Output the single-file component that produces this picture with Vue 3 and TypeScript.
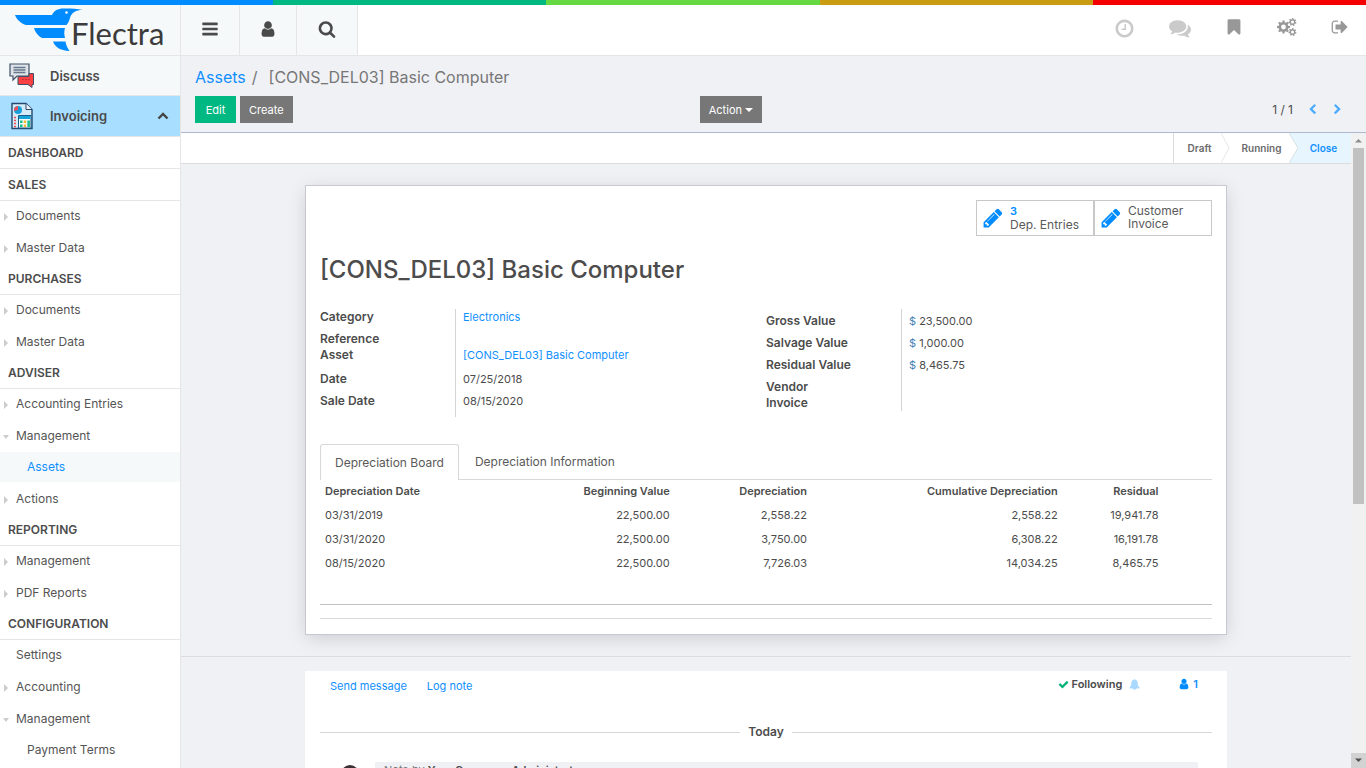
<script setup lang="ts">
interface MenuItem { label: string; kind: 'closed' | 'open' | 'leaf'; children?: { label: string; active?: boolean }[] }
interface MenuSection { title: string; items: MenuItem[] }
interface BoardRow { date: string; begin: string; amount: string; cumulative: string; residual: string }

const stripes = ['#008cff', '#00b881', '#66d942', '#c99c12', '#f40000']

const sections: MenuSection[] = [
  { title: 'DASHBOARD', items: [] },
  { title: 'SALES', items: [{ label: 'Documents', kind: 'closed' }, { label: 'Master Data', kind: 'closed' }] },
  { title: 'PURCHASES', items: [{ label: 'Documents', kind: 'closed' }, { label: 'Master Data', kind: 'closed' }] },
  {
    title: 'ADVISER',
    items: [
      { label: 'Accounting Entries', kind: 'closed' },
      { label: 'Management', kind: 'open', children: [{ label: 'Assets', active: true }] },
      { label: 'Actions', kind: 'closed' },
    ],
  },
  { title: 'REPORTING', items: [{ label: 'Management', kind: 'closed' }, { label: 'PDF Reports', kind: 'closed' }] },
  {
    title: 'CONFIGURATION',
    items: [
      { label: 'Settings', kind: 'leaf' },
      { label: 'Accounting', kind: 'closed' },
      { label: 'Management', kind: 'open', children: [{ label: 'Payment Terms' }] },
    ],
  },
]

const rows: BoardRow[] = [
  { date: '03/31/2019', begin: '22,500.00', amount: '2,558.22', cumulative: '2,558.22', residual: '19,941.78' },
  { date: '03/31/2020', begin: '22,500.00', amount: '3,750.00', cumulative: '6,308.22', residual: '16,191.78' },
  { date: '08/15/2020', begin: '22,500.00', amount: '7,726.03', cumulative: '14,034.25', residual: '8,465.75' },
]

const icons = {
  bars: 'M1664 1344v128q0 26-19 45t-45 19h-1408q-26 0-45-19t-19-45v-128q0-26 19-45t45-19h1408q26 0 45 19t19 45zm0-512v128q0 26-19 45t-45 19h-1408q-26 0-45-19t-19-45v-128q0-26 19-45t45-19h1408q26 0 45 19t19 45zm0-512v128q0 26-19 45t-45 19h-1408q-26 0-45-19t-19-45v-128q0-26 19-45t45-19h1408q26 0 45 19t19 45z',
  user: 'M1536 1399q0 109-62.5 187t-150.5 78h-854q-88 0-150.5-78t-62.5-187q0-85 8.5-160.5t31.5-152 58.5-131 94-89 134.5-34.5q131 128 313 128t313-128q76 0 134.5 34.5t94 89 58.5 131 31.5 152 8.5 160.5zm-256-887q0 159-112.5 271.5t-271.5 112.5-271.5-112.5-112.5-271.5 112.5-271.5 271.5-112.5 271.5 112.5 112.5 271.5z',
  search: 'M1216 832q0-185-131.5-316.5t-316.5-131.5-316.5 131.5-131.5 316.5 131.5 316.5 316.5 131.5 316.5-131.5 131.5-316.5zm512 832q0 52-38 90t-90 38q-54 0-90-38l-343-342q-179 124-399 124-143 0-273.5-55.5t-225-150-150-225-55.5-273.5 55.5-273.5 150-225 225-150 273.5-55.5 273.5 55.5 225 150 150 225 55.5 273.5q0 220-124 399l343 343q37 37 37 90z',
  clock: 'M1024 544v448q0 14-9 23t-23 9h-320q-14 0-23-9t-9-23v-64q0-14 9-23t23-9h224v-352q0-14 9-23t23-9h64q14 0 23 9t9 23zm416 352q0-148-73-273t-198-198-273-73-273 73-198 198-73 273 73 273 198 198 273 73 273-73 198-198 73-273zm224 0q0 209-103 385.5t-279.5 279.5-385.5 103-385.5-103-279.5-279.5-103-385.5 103-385.5 279.5-279.5 385.5-103 385.5 103 279.5 279.5 103 385.5z',
  comments: 'M1408 768q0 139-94 257t-256.5 186.5-353.5 68.5q-86 0-176-16-124 88-278 128-36 9-86 16h-3q-11 0-20.5-8t-11.5-21q-1-3-1-6.5t.5-6.5 2-6l2.5-5 3.5-5.5 4-5 4.5-5 4-4.5q5-6 23-25t26-29.5 22.5-29 25-38.5 20.5-44q-124-72-195-177t-71-224q0-139 94-257t256.5-186.5 353.5-68.5 353.5 68.5 256.5 186.5 94 257zm384 256q0 120-71 224.5t-195 176.5q10 24 20.5 44t25 38.5 22.5 29 26 29.5 23 25q1 1 4 4.5t4.5 5 4 5 3.5 5.5l2.5 5 2 6 .5 6.5-1 6.5q-3 14-13 22t-22 7q-50-7-86-16-154-40-278-128-90 16-176 16-271 0-472-132 58 4 88 4 161 0 309-45t264-129q125-92 192-212t67-254q0-77-23-152 129 71 204 178t75 230z',
  bookmark: 'M1420 128q23 0 44 9 33 13 52.5 41t19.5 62v1289q0 34-19.5 62t-52.5 41q-19 8-44 8-48 0-83-32l-441-424-441 424q-36 33-83 33-23 0-44-9-33-13-52.5-41t-19.5-62v-1289q0-34 19.5-62t52.5-41q21-9 44-9h1048z',
  signOut: 'M704 1440q0 4 1 20t.5 26.5-3 23.5-10 19.5-20.5 6.5h-320q-119 0-203.5-84.5t-84.5-203.5v-704q0-119 84.5-203.5t203.5-84.5h320q13 0 22.5 9.5t9.5 22.5q0 4 1 20t.5 26.5-3 23.5-10 19.5-20.5 6.5h-320q-66 0-113 47t-47 113v704q0 66 47 113t113 47h312l11.5 1 11.5 3 8 5.5 7 9 2 13.5zm928-544q0 26-19 45l-544 544q-19 19-45 19t-45-19-19-45v-288h-448q-26 0-45-19t-19-45v-384q0-26 19-45t45-19h448v-288q0-26 19-45t45-19 45 19l544 544q19 19 19 45z',
  pencil: 'M491 1536l91-91-235-235-91 91v107h128v128h107zm523-928q0-22-22-22-10 0-17 7l-542 542q-7 7-7 17 0 22 22 22 10 0 17-7l542-542q7-7 7-17zm-54-192l416 416-832 832h-416v-416zm683 96q0 53-37 90l-166 166-416-416 166-165q36-38 90-38 53 0 91 38l235 234q37 39 37 91z',
  check: 'M1671 566q0 40-28 68l-724 724-136 136q-28 28-68 28t-68-28l-136-136-362-362q-28-28-28-68t28-68l136-136q28-28 68-28t68 28l294 295 656-657q28-28 68-28t68 28l136 136q28 28 28 68z',
  bell: 'M912 1696q0-16-16-16-59 0-101.5-42.5t-42.5-101.5q0-16-16-16t-16 16q0 73 51.5 124.5t124.5 51.5q16 0 16-16zm816-288q0 52-38 90t-90 38h-448q0 106-75 181t-181 75-181-75-75-181h-448q-52 0-90-38t-38-90q50-42 91-88t85-119.5 74.5-158.5 50-206 19.5-260q0-152 117-282.5t307-158.5q-8-19-8-39 0-40 28-68t68-28 68 28 28 68q0 20-8 39 190 28 307 158.5t117 282.5q0 139 19.5 260t50 206 74.5 158.5 85 119.5 91 88z',
  left: 'M1427 301l-531 531 531 531q19 19 19 45t-19 45l-166 166q-19 19-45 19t-45-19l-742-742q-19-19-19-45t19-45l742-742q19-19 45-19t45 19l166 166q19 19 19 45t-19 45z',
  right: 'M1363 877l-742 742q-19 19-45 19t-45-19l-166-166q-19-19-19-45t19-45l531-531-531-531q-19-19-19-45t19-45l166-166q19-19 45-19t45 19l742 742q19 19 19 45t-19 45z',
}

// Outline of a toothed wheel with a round hole
function gear(cx: number, cy: number, outer: number, inner: number, hole: number, teeth: number, turn = 0): string {
  const points: string[] = []
  const step = (Math.PI * 2) / teeth
  for (let i = 0; i < teeth; i++) {
    const a = i * step + turn
    const corners: [number, number][] = [[-0.32, inner], [-0.2, outer], [0.2, outer], [0.32, inner]]
    for (const [offset, r] of corners) {
      points.push(`${(cx + r * Math.cos(a + offset * step)).toFixed(2)} ${(cy + r * Math.sin(a + offset * step)).toFixed(2)}`)
    }
  }
  return `M${points.join('L')}ZM${cx - hole} ${cy}a${hole} ${hole} 0 1 0 ${hole * 2} 0a${hole} ${hole} 0 1 0 ${-hole * 2} 0Z`
}
const cogs = gear(6.5, 9, 6.6, 4.9, 2.4, 8) + gear(15.5, 4, 4, 2.9, 1.5, 7, 0.3) + gear(15.5, 14, 4, 2.9, 1.5, 7, 0.3)
</script>

<template>
  <div class="app">
    <div class="stripes"><i v-for="c in stripes" :key="c" :style="{ background: c }"></i></div>

    <header class="top">
      <a class="logo" href="#" aria-label="Flectra">
        <svg width="70" height="46" viewBox="14 7 70 46" aria-hidden="true">
          <g fill="#008cff">
            <path d="M15 15H52C54 10 59 8 65 8.500C72 8.500 78 8.600 82.500 10C76 10 71.500 12.500 70 18C69 21.500 68 23.500 66.500 25H26C20 23 16.500 19 15 15Z" />
            <path d="M34 28H65C64 31 64 35 65 38H42C38 36 35 32 34 28Z" />
            <path d="M53 41.500H65.500C66 45 67.500 48 69.500 51C60 50.500 55 47 53 41.500Z" />
          </g>
          <circle cx="66.500" cy="12.500" r="1.300" fill="#fff" />
        </svg>
        <span class="wordmark">Flectra</span>
      </a>
      <nav class="tools">
        <button type="button" class="t1" aria-label="Toggle menu"><svg width="18" height="18" viewBox="0 0 1792 1792"><path :d="icons.bars" /></svg></button>
        <button type="button" class="t2" aria-label="User"><svg width="18" height="18" viewBox="0 0 1792 1792"><path :d="icons.user" /></svg></button>
        <button type="button" class="t3" aria-label="Search"><svg width="18" height="18" viewBox="0 0 1792 1792"><path :d="icons.search" /></svg></button>
      </nav>
      <nav class="systray">
        <button type="button" class="pale" aria-label="Activities"><svg width="21" height="21" viewBox="0 0 1792 1792"><path :d="icons.clock" /></svg></button>
        <button type="button" class="pale" aria-label="Conversations"><svg width="22" height="22" viewBox="0 0 1792 1792"><path :d="icons.comments" /></svg></button>
        <button type="button" aria-label="Bookmarks"><svg width="18" height="18" viewBox="0 0 1792 1792"><path :d="icons.bookmark" /></svg></button>
        <button type="button" aria-label="Settings"><svg width="20" height="18" viewBox="0 0 20 18"><path :d="cogs" fill-rule="evenodd" /></svg></button>
        <button type="button" aria-label="Log out"><svg width="18" height="18" viewBox="0 0 1792 1792"><path :d="icons.signOut" /></svg></button>
      </nav>
    </header>

    <div class="body">
      <aside class="side">
        <a class="app-link" href="#">
          <svg width="26" height="26" viewBox="0 0 26 26" aria-hidden="true">
            <path d="M1 1H20V13H8L4 17V13H1Z" fill="#dfe3e8" stroke="#3f5068" stroke-width="1.200" />
            <path d="M4.500 4.500H16.500M4.500 7H16.500M4.500 9.500H16.500" stroke="#66778e" stroke-width="1.300" />
            <path d="M9 13.500H20V10.500H24.500V21.500H23V24.500L19 21.500H9Z" fill="#fb4044" stroke="#3f5068" stroke-width="1" />
            <path d="M13.500 16.500h1m2 0h1m2 0h1" stroke="#8c1f2c" stroke-width="1.200" />
          </svg>
          <span>Discuss</span>
        </a>
        <a class="app-link current" href="#">
          <svg width="26" height="28" viewBox="0 0 26 28" aria-hidden="true">
            <path d="M3 1.500H17L23 7.500V26.500H3Z" fill="#d5ecf8" stroke="#26496d" stroke-width="1.400" />
            <path d="M17 1.500V7.500H23" fill="#f0f4f7" stroke="#26496d" stroke-width="1" />
            <circle cx="9" cy="8" r="4" fill="#159fdb" />
            <path d="M9 8V4A4 4 0 0 0 5.200 9Z" fill="#f14b57" />
            <path d="M5 15.500h2m-2 3h2m-2 3h2m-2 3h2" stroke="#ef4a58" stroke-width="1.500" />
            <path d="M9.500 13.500H22V26H9.500Z" fill="#f6fbfd" stroke="#1b5b86" stroke-width="1" />
            <path d="M10 14H21.500V17H10Z" fill="#13a4dc" />
            <path d="M11 18.500h2.500v2.500h-2.500zM11 22.500h2.500v2.500h-2.500z" fill="#18bd8b" />
            <path d="M14.700 18.500h2.500v2.500h-2.500zM14.700 22.500h2.500v2.500h-2.500z" fill="#f5b82e" />
            <path d="M18.400 18.500h2.500v6.500h-2.500z" fill="#18bd8b" />
          </svg>
          <span>Invoicing</span>
          <svg class="fold" width="12" height="8" viewBox="0 0 12 8" aria-hidden="true"><path d="M1.500 6.500L6 2L10.500 6.500" fill="none" stroke="#444" stroke-width="2.400" /></svg>
        </a>
        <section v-for="s in sections" :key="s.title">
          <h2>{{ s.title }}</h2>
          <ul v-if="s.items.length">
            <li v-for="m in s.items" :key="m.label">
              <a href="#" :class="['item', m.kind]">{{ m.label }}</a>
              <ul v-if="m.children" class="sub">
                <li v-for="c in m.children" :key="c.label"><a href="#" :class="['item', { active: c.active }]">{{ c.label }}</a></li>
              </ul>
            </li>
          </ul>
        </section>
      </aside>

      <main class="main">
        <div class="panel">
          <div class="crumbs"><a href="#">Assets</a><span class="slash">/</span><span>[CONS_DEL03] Basic Computer</span></div>
          <div class="actions">
            <div class="btns"><button type="button" class="btn green">Edit</button><button type="button" class="btn">Create</button></div>
            <div class="right">
              <button type="button" class="btn">Action <i class="caret"></i></button>
              <div class="pager">
                <span>1 / 1</span>
                <button type="button" aria-label="Previous"><svg width="11" height="11" viewBox="0 0 1792 1792"><path :d="icons.left" /></svg></button>
                <button type="button" aria-label="Next"><svg width="11" height="11" viewBox="0 0 1792 1792"><path :d="icons.right" /></svg></button>
              </div>
            </div>
          </div>
        </div>

        <div class="viewport">
          <div class="scroll">
            <div class="status">
              <button type="button" class="s1">Draft</button>
              <svg width="9" height="30" viewBox="0 0 9 30" aria-hidden="true"><path d="M0 0L8 15L0 30" fill="none" stroke="#e6e6e6" /></svg>
              <button type="button" class="s2">Running</button>
              <svg class="tint" width="9" height="30" viewBox="0 0 9 30" aria-hidden="true"><path d="M0 0L9 15L0 30" fill="#fff" stroke="#d8dfe4" /></svg>
              <button type="button" class="s3">Close</button>
            </div>

            <div class="sheet">
              <div class="stats">
                <button type="button"><svg width="22" height="22" viewBox="0 0 1792 1792"><path :d="icons.pencil" /></svg><span><b>3</b><br>Dep. Entries</span></button>
                <button type="button"><svg width="22" height="22" viewBox="0 0 1792 1792"><path :d="icons.pencil" /></svg><span>Customer<br>Invoice</span></button>
              </div>
              <h1>[CONS_DEL03] Basic Computer</h1>
              <div class="groups">
                <dl class="g-left">
                  <div><dt>Category</dt><dd><a href="#">Electronics</a></dd></div>
                  <div class="tall"><dt>Reference<br>Asset</dt><dd><a href="#">[CONS_DEL03] Basic Computer</a></dd></div>
                  <div><dt>Date</dt><dd>07/25/2018</dd></div>
                  <div><dt>Sale Date</dt><dd>08/15/2020</dd></div>
                </dl>
                <dl class="g-right">
                  <div><dt>Gross Value</dt><dd><em>$</em> 23,500.00</dd></div>
                  <div><dt>Salvage Value</dt><dd><em>$</em> 1,000.00</dd></div>
                  <div><dt>Residual Value</dt><dd><em>$</em> 8,465.75</dd></div>
                  <div><dt>Vendor<br>Invoice</dt><dd></dd></div>
                </dl>
              </div>
              <div class="tabs" role="tablist">
                <button type="button" role="tab" aria-selected="true" class="on">Depreciation Board</button>
                <button type="button" role="tab" aria-selected="false">Depreciation Information</button>
              </div>
              <table>
                <colgroup><col class="c1"><col class="c2"><col class="c3"><col class="c4"><col class="c5"><col></colgroup>
                <thead><tr><th>Depreciation Date</th><th>Beginning Value</th><th>Depreciation</th><th>Cumulative Depreciation</th><th>Residual</th><td></td></tr></thead>
                <tbody>
                  <tr v-for="r in rows" :key="r.date"><td>{{ r.date }}</td><td>{{ r.begin }}</td><td>{{ r.amount }}</td><td>{{ r.cumulative }}</td><td>{{ r.residual }}</td><td></td></tr>
                </tbody>
              </table>
              <div class="foot"></div>
            </div>

            <div class="chat-wrap">
              <div class="chat">
                <div class="chat-top">
                  <button type="button">Send message</button>
                  <button type="button">Log note</button>
                  <button type="button" class="follow"><svg width="11" height="11" viewBox="0 0 1792 1792" fill="#00b37a"><path :d="icons.check" /></svg><b>Following</b></button>
                  <svg class="bell" width="11" height="11" viewBox="0 0 1792 1792" fill="#aad9ff" aria-hidden="true"><path :d="icons.bell" /></svg>
                  <button type="button" class="count"><svg width="12" height="12" viewBox="0 0 1792 1792" fill="#008cff"><path :d="icons.user" /></svg><b>1</b></button>
                </div>
                <div class="day"><i></i><span>Today</span><i></i></div>
                <div class="msg">
                  <svg width="36" height="36" viewBox="0 0 36 36" aria-hidden="true"><circle cx="18" cy="12" r="9" fill="#3b3134" /><circle cx="18" cy="14" r="6" fill="#d6a184" /></svg>
                  <div class="note">Note by <b>Your Company, Administrator</b></div>
                </div>
              </div>
            </div>
          </div>
          <div class="bar" aria-hidden="true">
            <svg width="15" height="15" viewBox="0 0 15 15"><path d="M4 9.500L7.500 6L11 9.500Z" fill="#8c8c8c" /></svg>
            <div class="thumb"></div>
            <svg class="down" width="15" height="15" viewBox="0 0 15 15"><path d="M4 5.500L7.500 9L11 5.500Z" fill="#505050" /></svg>
          </div>
        </div>
      </main>
    </div>
  </div>
</template>

<style>
body { background: #f0f1f5; overflow: hidden; }
</style>

<style scoped>
.app { height: 100vh; display: flex; flex-direction: column; overflow: hidden; font: 12px/16px Inter, "Noto Sans", sans-serif; color: #4c4c4c; }
.app * { box-sizing: border-box; }
a { color: #108fff; text-decoration: none; }
button { font: inherit; color: inherit; background: none; border: 0; padding: 0; margin: 0; }
ul, dl, dd, h1, h2 { margin: 0; padding: 0; list-style: none; }
b { font-weight: 600; }
svg { display: block; flex: none; }
.stripes { display: grid; grid-template-columns: repeat(5, 1fr); height: 5px; flex: none; }

.top { display: flex; height: 51px; flex: none; background: #fff; border-bottom: 1px solid #e6e6e6; }
.logo { width: 181px; flex: none; display: flex; padding: 2px 0 0 14px; background: #f5f9fa; border-right: 1px solid #e6e6e6; color: #3c3a3a; }
.wordmark { font: 400 31px/52px Lato, sans-serif; margin-left: -13px; }
.tools { display: flex; background: #f5f9fa; }
.tools button, .systray button { display: flex; align-items: center; justify-content: center; padding-bottom: 2px; }
.tools button { border-right: 1px solid #e6e6e6; fill: #4a4a4a; }
.t1 { width: 59px; }
.t2 { width: 57px; }
.t3 { width: 61px; }
.systray { margin-left: auto; display: flex; fill: #989898; }
.systray button { width: 53px; padding-bottom: 7px; }
.systray .pale { width: 55px; padding-bottom: 4px; fill: #cacaca; }

.body { flex: 1; display: flex; min-height: 0; }
.side { width: 181px; flex: none; overflow: hidden; background: #fff; border-right: 1px solid #e6e6e6; }
.app-link { display: flex; align-items: center; height: 40px; padding: 0 11px 0 9px; border-bottom: 1px solid #e6e6e6; background: #f5f9fa; color: #4a4a4a; font-size: 13px; font-weight: 600; }
.app-link span { margin-left: 15px; }
.app-link.current { height: 41px; background: #a8deff; }
.fold { margin-left: auto; }
h2 { height: 32px; padding-left: 8px; font-size: 12px; line-height: 31px; font-weight: 600; border-bottom: 1px solid #e6e6e6; }
.item { display: flex; align-items: center; height: 30px; padding-left: 16px; color: #555; }
.item.closed::before { content: ""; border: 4px solid transparent; border-left-color: #ccc; border-right: 0; margin: 2px 8px 0 -12px; }
.item.open::before { content: ""; border: 3px solid transparent; border-top: 4px solid #ccc; border-bottom: 0; margin: 2px 7px 0 -13px; }
li + li { margin-top: 2px; }
.sub { margin-top: 1px; }
.sub .item { padding-left: 27px; }
.sub .active { background: #f5f9fa; color: #108fff; }

.main { flex: 1; min-width: 0; display: flex; flex-direction: column; }
.panel { flex: none; height: 77px; padding: 11px 15px 0 14px; border-bottom: 1px solid #aeb9cf; }
.crumbs { font-size: 16px; line-height: 20px; color: #777; }
.slash { margin: 0 11px 0 6px; }
.actions { display: grid; grid-template-columns: 7fr 9fr; margin-top: 9px; }
.btns { display: flex; gap: 4px; }
.btn { min-width: 41px; height: 27px; padding: 0 9px; background: #777; color: #fff; font-size: 11px; }
.green { background: #00b881; }
.caret { display: inline-block; border: 4px solid transparent; border-top-color: #fff; border-bottom: 0; vertical-align: 2px; }
.right { display: flex; justify-content: space-between; margin-left: -1px; }
.pager { display: flex; align-items: center; padding-right: 8px; }
.pager button { margin-left: 14px; fill: #4aabff; }

.viewport { flex: 1; min-height: 0; display: flex; }
.scroll { flex: 1; min-width: 0; overflow: hidden; }
.status { display: flex; justify-content: flex-end; height: 31px; background: #fff; border-bottom: 1px solid #dcdcdc; font-size: 10px; font-weight: 600; color: #6b6b6b; }
.s1 { width: 48px; padding-left: 4px; border-left: 1px solid #dcdcdc; }
.s2 { width: 59px; padding-left: 4px; }
.s3 { width: 53px; padding-right: 2px; }
.tint, .s3 { background: #e7f5ff; color: #108fff; }
.sheet { max-width: 922px; margin: 21px auto 0; padding: 14px; background: #fff; border: 1px solid #c8c8d3; box-shadow: 0 4px 18px -2px #0000002b; }
.stats { display: flex; justify-content: flex-end; }
.stats button { width: 118px; height: 36px; display: flex; align-items: center; border: 1px solid #c8c8c8; padding-left: 5px; text-align: left; line-height: 13px; color: #5a5a5a; }
.stats span { padding-bottom: 2px; }
.stats svg { fill: #008cff; margin-right: 6px; }
.stats b { color: #008cff; font-size: 11px; }
h1 { margin-top: 18px; font-size: 24px; line-height: 32px; font-weight: 500; }
.groups { display: grid; grid-template-columns: 1fr 1fr; align-items: start; margin-top: 23px; min-height: 135px; }
.groups dl { background: linear-gradient(#d4d4d4, #d4d4d4) 135px 0 / 1px 100% no-repeat; }
.groups dl > div { display: grid; grid-template-columns: 143px 1fr; align-items: end; padding-bottom: 6px; }
.groups .tall { padding-bottom: 8px; }
.groups .g-left { padding-bottom: 2px; }
.groups .g-right { padding-top: 4px; }
.groups .g-right > div:last-child { padding-bottom: 0; }
dt { font-weight: 600; }
dd { font-size: 11px; }
em { font-style: normal; color: #3f80b5; }
.tabs { display: flex; border-bottom: 1px solid #d8d8d8; height: 36px; }
.tabs button { padding: 0 16px; color: #5a5a5a; }
.tabs .on { height: 36px; border: 1px solid #d8d8d8; border-bottom: 0; border-radius: 3px 3px 0 0; background: #fff; padding: 0 14px; }
table { width: 100%; table-layout: fixed; border-collapse: collapse; font-size: 11px; }
th, td { height: 24px; padding: 0 0 2px; text-align: right; white-space: nowrap; }
th { font-weight: 600; }
tr > :first-child { text-align: left; padding-left: 5px; }
.c1 { width: 22%; }
.c2 { width: 17.2%; }
.c3 { width: 15.4%; }
.c4 { width: 28.1%; }
.c5 { width: 11.3%; }
.foot { height: 15px; margin: 28px 0 1px; border-top: 1px solid #c0c0c0; border-bottom: 1px solid #dcdcdc; }

.chat-wrap { margin-top: 21px; padding-top: 14px; border-top: 1px solid #dcdcdc; }
.chat { max-width: 922px; margin: 0 auto; padding: 0 15px; background: #fff; font-size: 11px; }
.chat-top { display: flex; align-items: center; height: 30px; padding: 0 14px 0 10px; gap: 20px; color: #108fff; }
.chat-top .follow { margin-left: auto; }
.follow, .count { display: flex; align-items: center; gap: 3px; padding-bottom: 4px; }
.follow b { color: #4c4c4c; }
.bell { margin: 0 18px 4px -13px; }
.day { display: flex; align-items: center; gap: 8px; margin-top: 23px; font-size: 12px; font-weight: 600; }
.day i { flex: 1; height: 1px; background: #d6d6d6; }
.msg { display: flex; padding: 22px 14px 0 12px; }
.msg svg { margin-right: 7px; }
.note { flex: 1; height: 60px; padding-left: 9px; background: #f0f1f5; color: #777; }
.note b { color: #4c4c4c; }
.bar { width: 15px; flex: none; display: flex; flex-direction: column; background: #f1f1f1; }
.thumb { height: 56%; margin: 0 2px; background: #c1c1c1; }
.down { margin-top: auto; background: #d2d2d2; }
</style>
